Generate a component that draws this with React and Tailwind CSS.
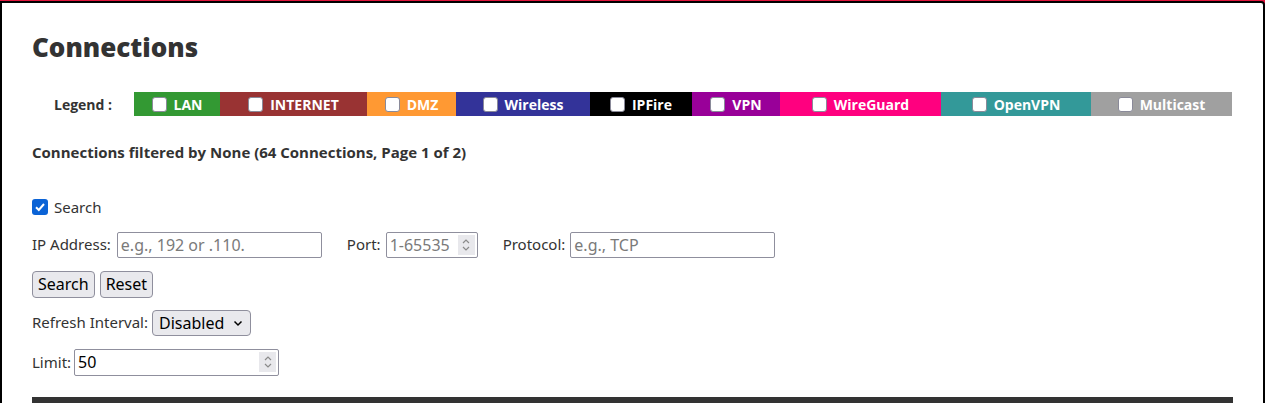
import React from "react";

const legend = [
  ["LAN", "bg-[#339933]", "w-[86px]"],
  ["INTERNET", "bg-[#993333]", "w-[147px]"],
  ["DMZ", "bg-[#ff9933]", "w-[89px]"],
  ["Wireless", "bg-[#333399]", "w-[134px]"],
  ["IPFire", "bg-[#000000]", "w-[102px]"],
  ["VPN", "bg-[#990099]", "w-[88px]"],
  ["WireGuard", "bg-[#ff007f]", "w-[161px]"],
  ["OpenVPN", "bg-[#339999]", "w-[150px]"],
  ["Multicast", "bg-[#a0a0a0]", "w-[141px]"],
];

function Spinner() {
  return (
    <span className="flex h-[20px] w-[17px] items-center justify-center bg-[#e8e8ec]">
      <svg width="10" height="16" viewBox="0 0 10 16" fill="none" stroke="#8a8a8a" strokeWidth="1.2">
        <path d="M2 6 L5 3 L8 6" />
        <path d="M2 10 L5 13 L8 10" />
      </svg>
    </span>
  );
}

export default function App() {
  return (
    <div className="min-h-[403px] bg-[#e0153c] pt-px" style={{ fontFamily: '"Noto Sans", sans-serif' }}>
      <div className="min-h-[402px] rounded-tr-[4px] border-2 border-black bg-white px-[30px] pt-[29px]">
        <h1
          className="text-[26px] font-extrabold leading-[30px] text-[#333333]"
          style={{ fontFamily: '"Open Sans", sans-serif' }}
        >
          Connections
        </h1>
        <div
          className="mt-[30px] flex h-[24px] text-[14px] font-bold"
          style={{ fontFamily: '"Open Sans", sans-serif' }}
        >
          <div className="flex w-[102px] items-center justify-center text-[#333333]">Legend :</div>
          {legend.map(([name, bg, w]) => (
            <div key={name} className={`flex items-center justify-center gap-[7px] text-white ${bg} ${w}`}>
              <span className="h-[15px] w-[15px] rounded-[3px] border border-[#8a8a99] bg-white" />
              <span>{name}</span>
            </div>
          ))}
        </div>
        <div
          className="mt-[26px] text-[15px] font-bold leading-[20px] text-[#333333]"
          style={{ fontFamily: '"Open Sans", sans-serif' }}
        >
          Connections filtered by None (64 Connections, Page 1 of 2)
        </div>
        <div className="mt-[34px] flex items-center gap-[6px] text-[15px] text-[#333333]">
          <span className="flex h-[16px] w-[16px] items-center justify-center rounded-[3px] bg-[#0b63d6]">
            <svg width="12" height="12" viewBox="0 0 12 12" fill="none" stroke="white" strokeWidth="2">
              <path d="M2 6.2 L4.8 9 L10 3" />
            </svg>
          </span>
          <span>Search</span>
        </div>
        <div className="mt-[13px] flex items-center text-[15px] text-[#333333]">
          <span>IP Address:</span>
          <input
            className="ml-[6px] h-[26px] w-[205px] rounded-[2px] border border-[#8f8f9d] px-[3px] text-[16px] placeholder:text-[#7a7a7a]"
            placeholder="e.g., 192 or .110."
          />
          <span className="ml-[25px]">Port:</span>
          <div className="ml-[5px] flex h-[26px] w-[92px] items-center rounded-[2px] border border-[#8f8f9d] pr-[2px]">
            <input className="w-0 flex-1 px-[3px] text-[16px] placeholder:text-[#7a7a7a]" placeholder="1-65535" />
            <Spinner />
          </div>
          <span className="ml-[25px]">Protocol:</span>
          <input
            className="ml-[5px] h-[26px] w-[205px] rounded-[2px] border border-[#8f8f9d] px-[3px] text-[16px] placeholder:text-[#7a7a7a]"
            placeholder="e.g., TCP"
          />
        </div>
        <div className="mt-[13px] flex gap-[5px] text-[16px] text-black">
          <button className="h-[27px] rounded-[4px] border border-[#8f8f9d] bg-[#e9e9ed] px-[5px]">Search</button>
          <button className="h-[27px] rounded-[4px] border border-[#8f8f9d] bg-[#e9e9ed] px-[5px]">Reset</button>
        </div>
        <div className="mt-[12px] flex items-center text-[15px] text-[#333333]">
          <span>Refresh Interval:</span>
          <div className="ml-[4px] flex h-[26px] w-[99px] items-center rounded-[4px] border border-[#8f8f9d] bg-[#e9e9ed] pl-[6px] text-[16px] text-black">
            <span>Disabled</span>
            <svg className="ml-[9px]" width="10" height="8" viewBox="0 0 10 8" fill="none" stroke="black" strokeWidth="1.5">
              <path d="M1.5 2.5 L5 6 L8.5 2.5" />
            </svg>
          </div>
        </div>
        <div className="mt-[13px] flex items-center text-[15px] text-[#333333]">
          <span>Limit:</span>
          <div className="ml-[3px] flex h-[27px] w-[205px] items-center rounded-[2px] border border-[#8f8f9d] pr-[2px]">
            <input className="w-0 flex-1 px-[3px] text-[16px] text-black" defaultValue="50" />
            <Spinner />
          </div>
        </div>
        <div className="mt-[21px] h-[10px] bg-[#333333]" />
      </div>
    </div>
  );
}
